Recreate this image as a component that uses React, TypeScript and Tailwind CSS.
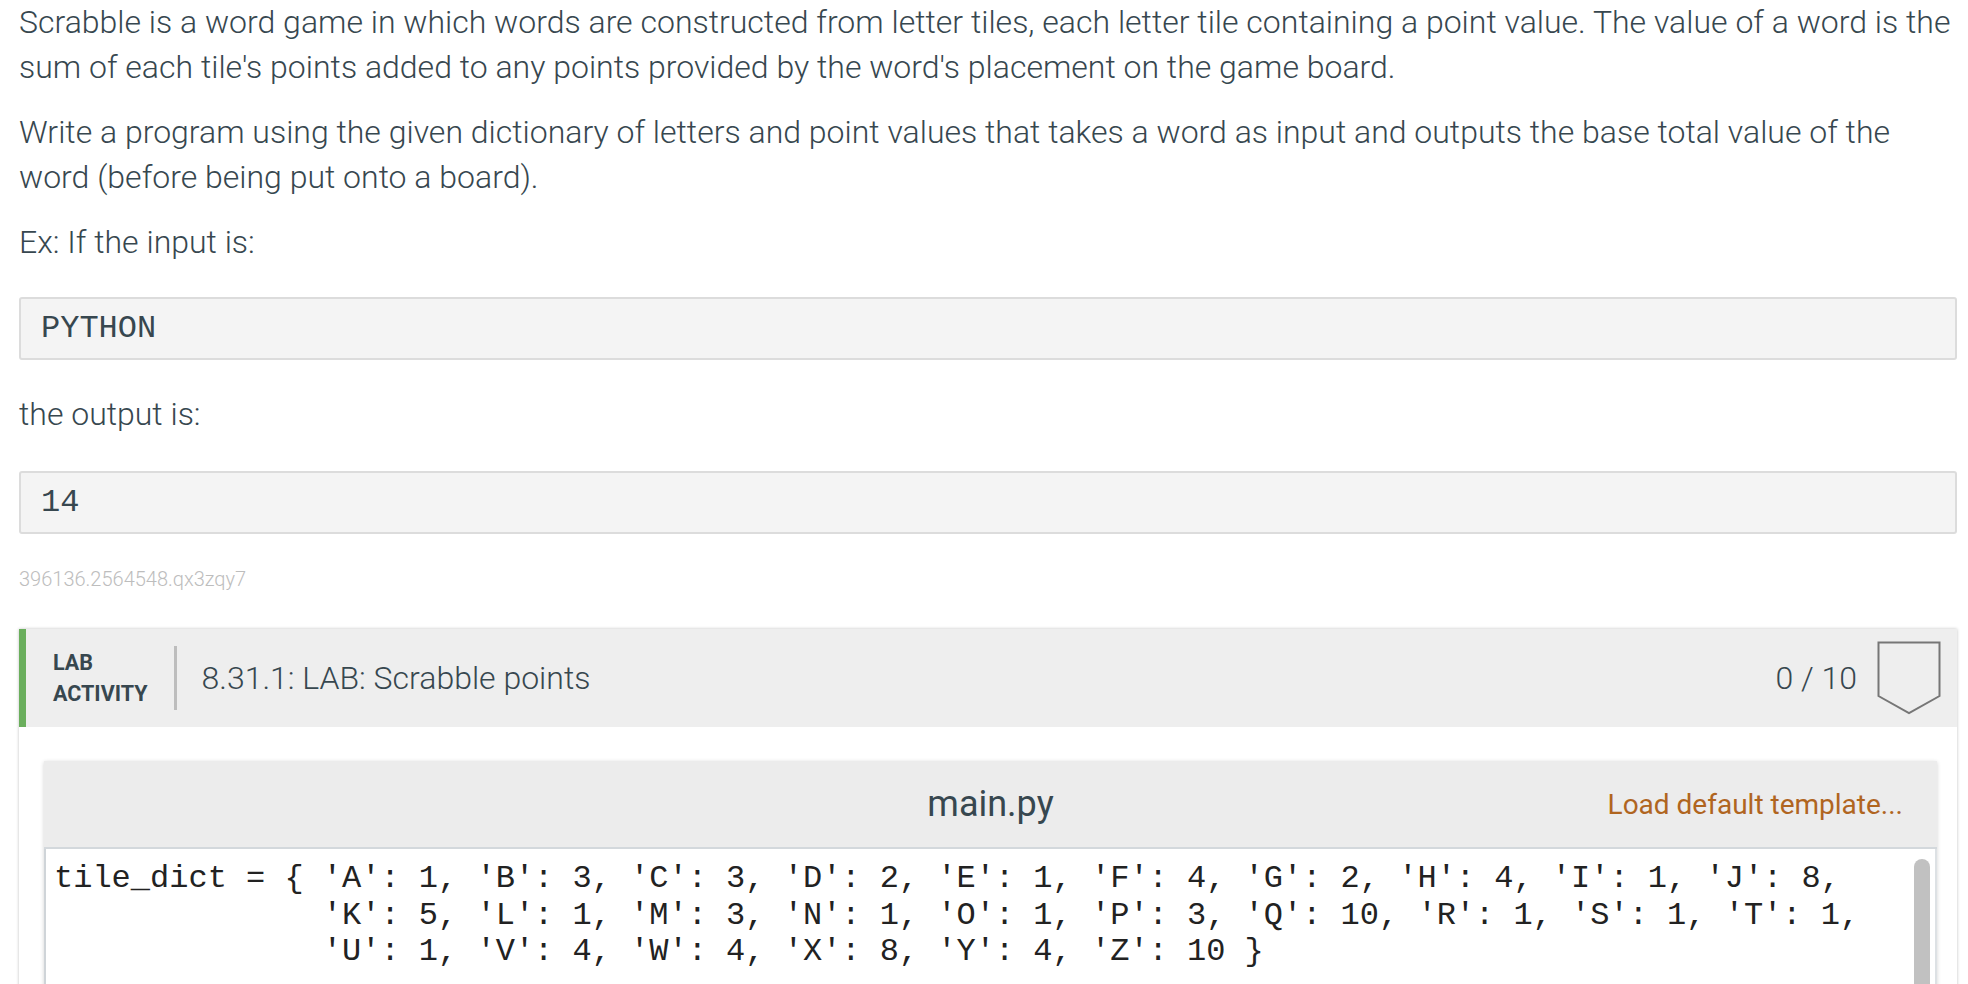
const para1 =
  "Scrabble is a word game in which words are constructed from letter tiles, each letter tile containing a point value. The value of a word is the sum of each tile's points added to any points provided by the word's placement on the game board."
const para2 =
  'Write a program using the given dictionary of letters and point values that takes a word as input and outputs the base total value of the word (before being put onto a board).'

const code = [
  "tile_dict = { 'A': 1, 'B': 3, 'C': 3, 'D': 2, 'E': 1, 'F': 4, 'G': 2, 'H': 4, 'I': 1, 'J': 8,",
  "              'K': 5, 'L': 1, 'M': 3, 'N': 1, 'O': 1, 'P': 3, 'Q': 10, 'R': 1, 'S': 1, 'T': 1,",
  "              'U': 1, 'V': 4, 'W': 4, 'X': 8, 'Y': 4, 'Z': 10 }",
]

function Sample({ text, className }: { text: string; className: string }) {
  return (
    <div
      className={`${className} flex h-[63px] items-center rounded-[3px] border-2 border-[#dcdcdc] bg-[#f4f4f4] pl-[20px] font-['Liberation_Mono',monospace] text-[32px] font-normal text-[#37474f]`}
    >
      {text}
    </div>
  )
}

function Badge() {
  return (
    <svg width="64" height="74" viewBox="0 0 64 74" className="flex-none">
      <polygon points="1.5,1.5 62.5,1.5 62.5,55 32,72 1.5,55" fill="none" stroke="#767676" strokeWidth="2" />
    </svg>
  )
}

export default function App() {
  return (
    <div className="min-h-screen overflow-hidden bg-white pl-[19px] pr-[11px] font-['Roboto',sans-serif] text-[32px] font-light leading-[45px] text-[#37474f]">
      <p>{para1}</p>
      <p className="mt-[20px]">{para2}</p>
      <p className="mt-[20px]">Ex: If the input is:</p>
      <Sample text="PYTHON" className="mt-[32px]" />
      <p className="mt-[32px]">the output is:</p>
      <Sample text="14" className="mt-[34px]" />
      <div className="mt-[32px] text-[20px] leading-[27px] text-[#bdbdbd]">396136.2564548.qx3zqy7</div>

      <section className="mt-[36px] bg-white shadow-[0_0_3px_rgba(0,0,0,0.25)]">
        <header className="flex h-[98px] items-center border-l-[7px] border-[#6aae5c] bg-[#eeeeee] pr-[16px]">
          <div className="ml-[27px] text-[21.5px] font-bold uppercase leading-[31px] text-[#37474f]">
            <div>Lab</div>
            <div>Activity</div>
          </div>
          <div className="ml-[27px] h-[64px] w-[3px] bg-[#bdbdbd]" />
          <h1 className="ml-[24px] flex-1 text-[32px] font-light">8.31.1: LAB: Scrabble points</h1>
          <span className="mr-[20px] text-[32px] font-light">0 / 10</span>
          <Badge />
        </header>

        <div className="pl-[25px] pr-[20px] pt-[34px]">
          <div className="shadow-[0_1px_4px_rgba(0,0,0,0.18)]">
            <div className="relative flex h-[88px] items-center justify-center border-b-2 border-[#d3d8dc] bg-[#ececec]">
              <span className="text-[36px] font-normal text-[#37474f]">main.py</span>
              <span className="absolute right-[34px] text-[28px] font-normal text-[#b0651f]">
                Load default template...
              </span>
            </div>
            <div className="flex h-[160px] border-l-2 border-[#cfd4d8] bg-white">
              <pre className="flex-1 pl-[8px] pt-[12px] font-['Liberation_Mono',monospace] text-[32px] font-normal leading-[36.5px] text-[#222]">
                {code.join('\n')}
              </pre>
              <div className="w-[28px] border-r-2 border-[#dde1e4] pl-[5px] pt-[10px]">
                <div className="h-[140px] w-[16px] rounded-full bg-[#c1c1c1]" />
              </div>
            </div>
          </div>
        </div>
      </section>
    </div>
  )
}
